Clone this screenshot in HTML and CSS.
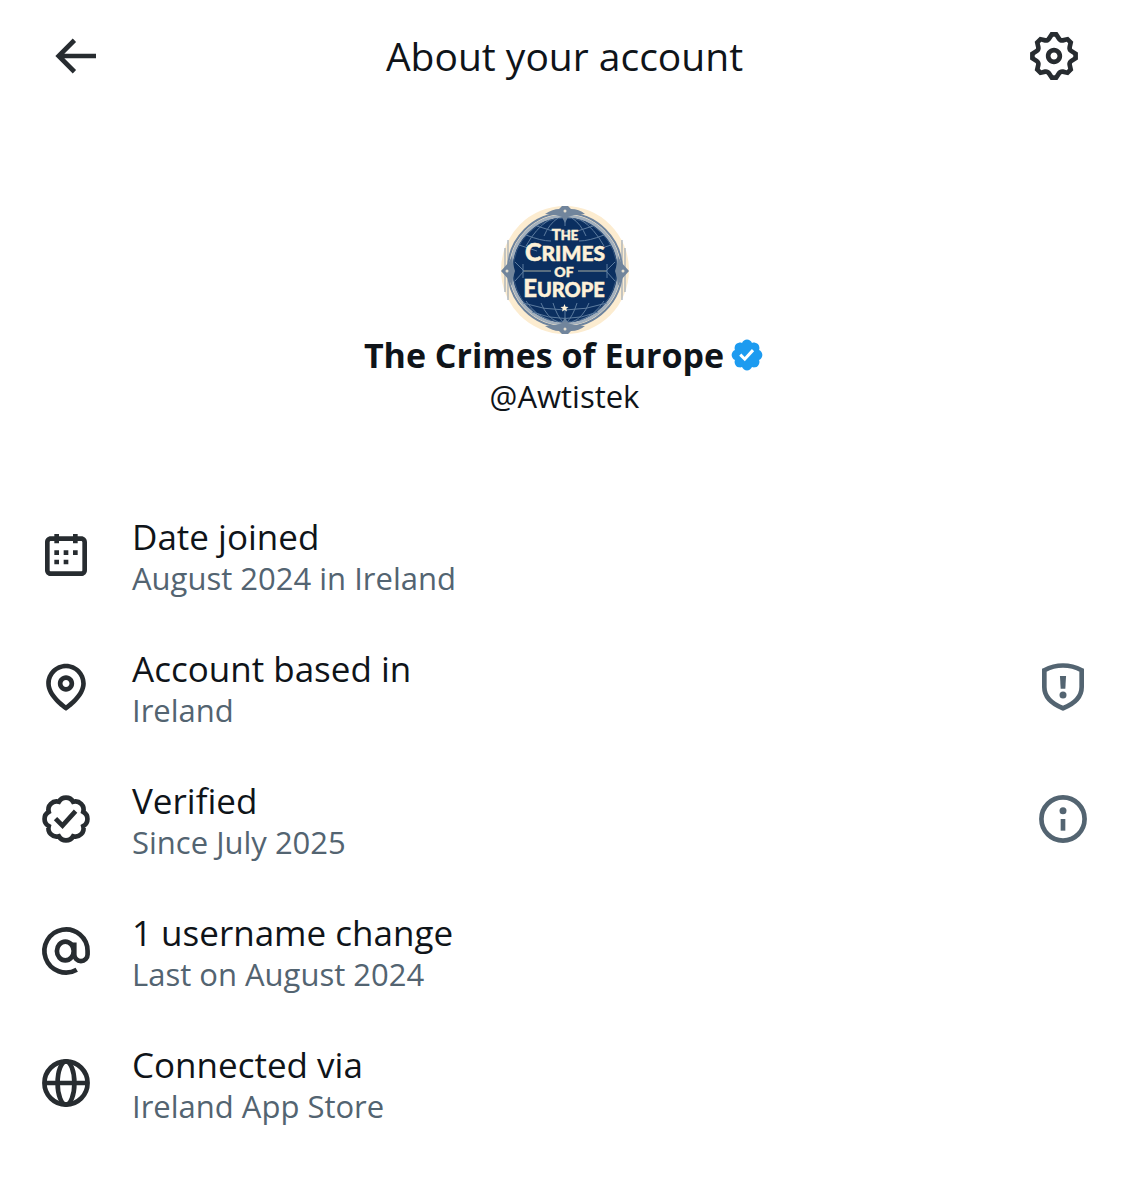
FILE: index.html
```html
<!DOCTYPE html>
<html lang="en">
<head>
  <meta charset="UTF-8">
  <meta name="viewport" content="width=device-width, initial-scale=1.0">
  <title>About your account</title>
  <link rel="stylesheet" href="styles.css">
</head>
<body>

  <header class="topbar">
    <button class="icon-btn" aria-label="Back">
      <svg class="icon" viewBox="0 0 24 24"><path d="M7.414 13l5.043 5.04-1.414 1.42L3.586 12l7.457-7.46 1.414 1.42L7.414 11H21v2H7.414z"/></svg>
    </button>
    <h1>About your account</h1>
    <button class="icon-btn" aria-label="Settings">
      <svg class="icon" viewBox="0 0 24 24"><path d="M10.54 1.75h2.92l1.57 2.36c.11.17.32.25.53.21l2.53-.59 2.17 2.17-.58 2.54c-.05.2.04.41.21.53l2.36 1.57v2.92l-2.36 1.57c-.17.12-.26.33-.21.53l.58 2.54-2.17 2.17-2.53-.59c-.21-.04-.42.04-.53.21l-1.57 2.36h-2.92l-1.58-2.36c-.11-.17-.32-.25-.52-.21l-2.54.59-2.17-2.17.58-2.54c.05-.2-.03-.41-.21-.53l-2.35-1.57v-2.92L4.1 8.97c.18-.12.26-.33.21-.53L3.73 5.9 5.9 3.73l2.54.59c.2.04.41-.04.52-.21l1.58-2.36zm1.07 2l-.98 1.47C10.05 6.08 9 6.5 7.99 6.27l-1.46-.34-.6.6.33 1.46c.24 1.01-.18 2.07-1.05 2.64l-1.46.98v.78l1.46.98c.87.57 1.29 1.63 1.05 2.64l-.33 1.46.6.6 1.46-.34c1.01-.23 2.06.19 2.64 1.05l.98 1.47h.78l.97-1.47c.58-.86 1.63-1.28 2.65-1.05l1.45.34.61-.6-.34-1.46c-.23-1.01.18-2.07 1.05-2.64l1.47-.98v-.78l-1.47-.98c-.87-.57-1.28-1.63-1.05-2.64l.34-1.46-.61-.6-1.45.34c-1.02.23-2.07-.19-2.65-1.05l-.97-1.47h-.78zM12 10.5c-.83 0-1.5.67-1.5 1.5s.67 1.5 1.5 1.5c.82 0 1.5-.67 1.5-1.5s-.68-1.5-1.5-1.5zM8.5 12c0-1.93 1.56-3.5 3.5-3.5 1.93 0 3.5 1.57 3.5 3.5s-1.57 3.5-3.5 3.5c-1.94 0-3.5-1.57-3.5-3.5z"/></svg>
    </button>
  </header>

  <section class="profile">
    <svg class="avatar" viewBox="0 0 128 128">
      <circle cx="64" cy="64" r="64" fill="#fcecd0"/>
      <!-- frame -->
      <g fill="none" stroke="#8b9db1">
        <path d="M4 42v44M7 34v60M121 34v60M124 42v44"/>
        <circle cx="64" cy="64" r="57" stroke="#6e849e" stroke-width="2"/>
        <circle cx="64" cy="64" r="54" fill="#0b2f60" stroke="#a3b0bd" stroke-width="3"/>
        <circle cx="64" cy="64" r="52" stroke="#35567f"/>
      </g>
      <g fill="#71859c">
        <path d="M0 65l8-9 3-6 1 8 2 7-2 7-1 8-3-6zM128 65l-8-9-3-6-1 8-2 7 2 7 1 8 3-6z"/>
        <path d="M44 8q8-5 14-5l3-3h6l3 3q8 0 14 5l-11 1-6 2-3 6-3-6-6-2z"/>
        <path d="M44 120q8 5 14 5l3 3h6l3-3q8 0 14-5l-11-1-6-2-3-6-3 6-6 2z"/>
      </g>
      <g fill="#e6dfcf">
        <circle cx="64" cy="5" r="1.500"/><circle cx="64" cy="123" r="1.500"/>
        <circle cx="6" cy="65" r="1.500"/><circle cx="122" cy="65" r="1.500"/>
      </g>
      <!-- globe lines -->
      <g fill="none" stroke="#5d7c9f" stroke-width="1">
        <path d="M64 13v7M64 105v11M57 12Q48 18 43 30M71 12Q80 18 85 30M48 14Q35 22 25 40M80 14Q93 22 103 40"/>
        <path d="M36 20Q64 32 92 20M25 29Q40 35 50 35M103 29Q88 35 78 35M18 39L36 45M110 39L92 45"/>
        <path d="M40 97Q46 112 57 116M88 97Q82 112 71 116M25 95Q34 109 48 114M103 95Q94 109 80 114"/>
        <path d="M22 97Q64 111 106 97M31 106Q64 119 97 106M52 97Q56 110 62 116M76 97Q72 110 66 116"/>
        <path d="M14 56l9 9-9 10M114 56l-9 9 9 10M22 58v14M106 58v14"/>
      </g>
      <path d="M23 65h27M77 65h28" stroke="#a8ad9f" stroke-width="1"/>
      <g class="logo-text" text-anchor="middle">
        <text x="64" y="34" font-size="15">T<tspan font-size="13">HE</tspan></text>
        <text x="64" y="55" font-size="25">C<tspan font-size="21">RIMES</tspan></text>
        <text x="63" y="71" font-size="14">OF</text>
        <text x="63" y="91" font-size="24">E<tspan font-size="20">UROPE</tspan></text>
      </g>
      <path d="M63.500 98l1.100 2.700 2.900.2-2.200 1.900.7 2.800-2.500-1.500-2.500 1.500.7-2.800-2.200-1.900 2.900-.2z" fill="#fff3d9"/>
    </svg>
    <div class="name">
      <h2>The Crimes of Europe</h2>
      <svg class="badge" viewBox="0 0 22 22"><path d="M20.396 11c-.018-.646-.215-1.275-.57-1.816-.354-.54-.852-.972-1.438-1.246.223-.607.27-1.264.14-1.897-.131-.634-.437-1.218-.882-1.687-.47-.445-1.053-.75-1.687-.882-.633-.13-1.29-.083-1.897.14-.273-.587-.704-1.086-1.245-1.44S11.647 1.62 11 1.604c-.646.017-1.273.213-1.813.568s-.969.854-1.24 1.44c-.608-.223-1.267-.272-1.902-.14-.635.13-1.22.436-1.69.882-.445.47-.749 1.055-.878 1.688-.13.633-.08 1.29.144 1.896-.587.274-1.087.705-1.443 1.245-.356.54-.555 1.17-.574 1.817.02.647.218 1.276.574 1.817.356.54.856.972 1.443 1.245-.224.606-.274 1.263-.144 1.896.13.634.433 1.218.877 1.688.47.443 1.054.747 1.687.878.633.132 1.29.084 1.897-.136.274.586.705 1.084 1.246 1.439.54.354 1.17.551 1.816.569.647-.016 1.276-.213 1.817-.567s.972-.854 1.245-1.44c.604.239 1.266.296 1.903.164.636-.132 1.22-.447 1.68-.907.46-.46.776-1.044.908-1.681s.075-1.299-.165-1.903c.586-.274 1.084-.705 1.439-1.246.354-.54.551-1.17.569-1.816zM9.662 14.85l-3.429-3.428 1.293-1.302 2.072 2.072 4.4-4.794 1.347 1.246z"/></svg>
    </div>
    <p class="handle">@Awtistek</p>
  </section>

  <ul class="details">
    <li class="row">
      <svg class="icon" viewBox="0 0 24 24"><path d="M7 4V3h2v1h6V3h2v1h1.500C19.890 4 21 5.120 21 6.500v12c0 1.380-1.110 2.500-2.500 2.500h-13C4.120 21 3 19.880 3 18.500v-12C3 5.120 4.120 4 5.500 4H7zm0 2H5.500c-.27 0-.5.22-.5.5v12c0 .28.23.5.5.5h13c.28 0 .5-.22.5-.5v-12c0-.28-.22-.5-.5-.5H17v1h-2V6H9v1H7V6zm0 6h2v-2H7v2zm0 4h2v-2H7v2zm4-4h2v-2h-2v2zm0 4h2v-2h-2v2zm4-4h2v-2h-2v2z"/></svg>
      <div class="text">
        <h3>Date joined</h3>
        <p>August 2024 in Ireland</p>
      </div>
    </li>
    <li class="row">
      <svg class="icon" viewBox="0 0 24 24"><path d="M12 7c-1.930 0-3.500 1.570-3.500 3.500S10.070 14 12 14s3.500-1.570 3.500-3.500S13.930 7 12 7zm0 5c-.827 0-1.500-.673-1.500-1.500S11.173 9 12 9s1.500.673 1.500 1.500S12.827 12 12 12zm0-10c-4.687 0-8.500 3.813-8.500 8.500 0 5.967 7.621 11.116 7.945 11.332l.555.37.555-.37c.324-.216 7.945-5.365 7.945-11.332C20.500 5.813 16.687 2 12 2zm0 17.770c-1.665-1.241-6.500-5.196-6.500-9.270C5.500 6.916 8.416 4 12 4s6.500 2.916 6.500 6.500c0 4.073-4.835 8.028-6.500 9.270z"/></svg>
      <div class="text">
        <h3>Account based in</h3>
        <p>Ireland</p>
      </div>
      <button class="icon-btn muted" aria-label="Location notice">
        <svg class="icon" viewBox="0 0 24 24">
          <path class="line" d="M12 2.800c3 0 5.700.8 8 2V12c0 4-3.200 7.200-8 9.100C7.200 19.200 4 16 4 12V4.800c2.300-1.200 5-2 8-2z"/>
          <path d="M10.700 7.300h2.600l-.3 5.500h-2z"/>
          <circle cx="12" cy="15.400" r="1.500"/>
        </svg>
      </button>
    </li>
    <li class="row">
      <svg class="icon" viewBox="0 0 24 24">
        <path class="line" d="M8.940 4.610A3.500 3.500 0 0 1 15.060 4.610A3.500 3.500 0 0 1 19.390 8.940A3.500 3.500 0 0 1 19.390 15.060A3.500 3.500 0 0 1 15.060 19.390A3.500 3.500 0 0 1 8.940 19.390A3.500 3.500 0 0 1 4.610 15.060A3.500 3.500 0 0 1 4.610 8.940A3.500 3.500 0 0 1 8.940 4.610z"/>
        <path class="line" d="M7.500 11.800l3 3 5.600-6.200"/>
      </svg>
      <div class="text">
        <h3>Verified</h3>
        <p>Since July 2025</p>
      </div>
      <button class="icon-btn muted" aria-label="Verification info">
        <svg class="icon" viewBox="0 0 24 24">
          <circle class="line" cx="12" cy="12" r="9.250"/>
          <circle cx="12" cy="8.500" r="1.500"/>
          <path d="M11 12h2v5h-2z"/>
        </svg>
      </button>
    </li>
    <li class="row">
      <svg class="icon" viewBox="0 0 24 24">
        <path class="line" d="M16.600 20A9.250 9.250 0 1 1 21.250 12v1.500a2.850 2.850 0 0 1-5.700 0V8.400"/>
        <ellipse class="line" cx="11.700" cy="12" rx="3.600" ry="4"/>
      </svg>
      <div class="text">
        <h3>1 username change</h3>
        <p>Last on August 2024</p>
      </div>
    </li>
    <li class="row">
      <svg class="icon" viewBox="0 0 24 24">
        <circle class="line" cx="12" cy="12" r="9.250"/>
        <ellipse class="line" cx="12" cy="12" rx="3.600" ry="9.250"/>
        <path class="line" d="M3 12h18"/>
      </svg>
      <div class="text">
        <h3>Connected via</h3>
        <p>Ireland App Store</p>
      </div>
    </li>
  </ul>

</body>
</html>
```
FILE: styles.css
```css
* {
  margin: 0;
  padding: 0;
  box-sizing: border-box;
}

body {
  background: #fff;
  color: #0f1419;
  font-family: "Open Sans", "Noto Sans", sans-serif;
}
h1, h3 {
  font-weight: 400;
}
.topbar {
  display: flex;
  align-items: center;
  justify-content: space-between;
  padding: 28px 47px;
}
.topbar h1 {
  font-size: 39px;
  line-height: 56px;
}
.icon {
  display: block;
  flex: none;
  width: 56px;
  height: 56px;
  fill: #272c30;
  stroke: #272c30;
  stroke-width: 0;
}
.icon .line {
  fill: none;
  stroke-width: 2;
}
.icon-btn {
  border: 0;
  background: none;
  cursor: pointer;
}
.muted .icon {
  fill: #536471;
  stroke: #536471;
}
.profile {
  display: flex;
  flex-direction: column;
  align-items: center;
  padding: 94px 38px 0;
}
.avatar {
  width: 128px;
  height: 128px;
}
.logo-text {
  fill: #fdf1d8;
  font-family: Lato, sans-serif;
  font-weight: 900;
  stroke: #fdf1d8;
  stroke-width: 0.5px;
}
.name {
  display: flex;
  align-items: center;
  gap: 5px;
}
.name h2 {
  font-size: 34px;
  font-weight: 700;
  line-height: 42px;
}
.badge {
  width: 36px;
  height: 36px;
  fill: #1d9bf0;
}
.handle {
  font-size: 31px;
  line-height: 40px;
}
.details {
  list-style: none;
  display: flex;
  flex-direction: column;
  gap: 50px;
  padding: 98px 38px 50px;
}
.row {
  display: flex;
  align-items: center;
  gap: 38px;
}
.text {
  flex: 1;
}
.text h3 {
  font-size: 35px;
  line-height: 46px;
}
.text p {
  color: #536471;
  font-size: 31px;
  line-height: 36px;
}
```
